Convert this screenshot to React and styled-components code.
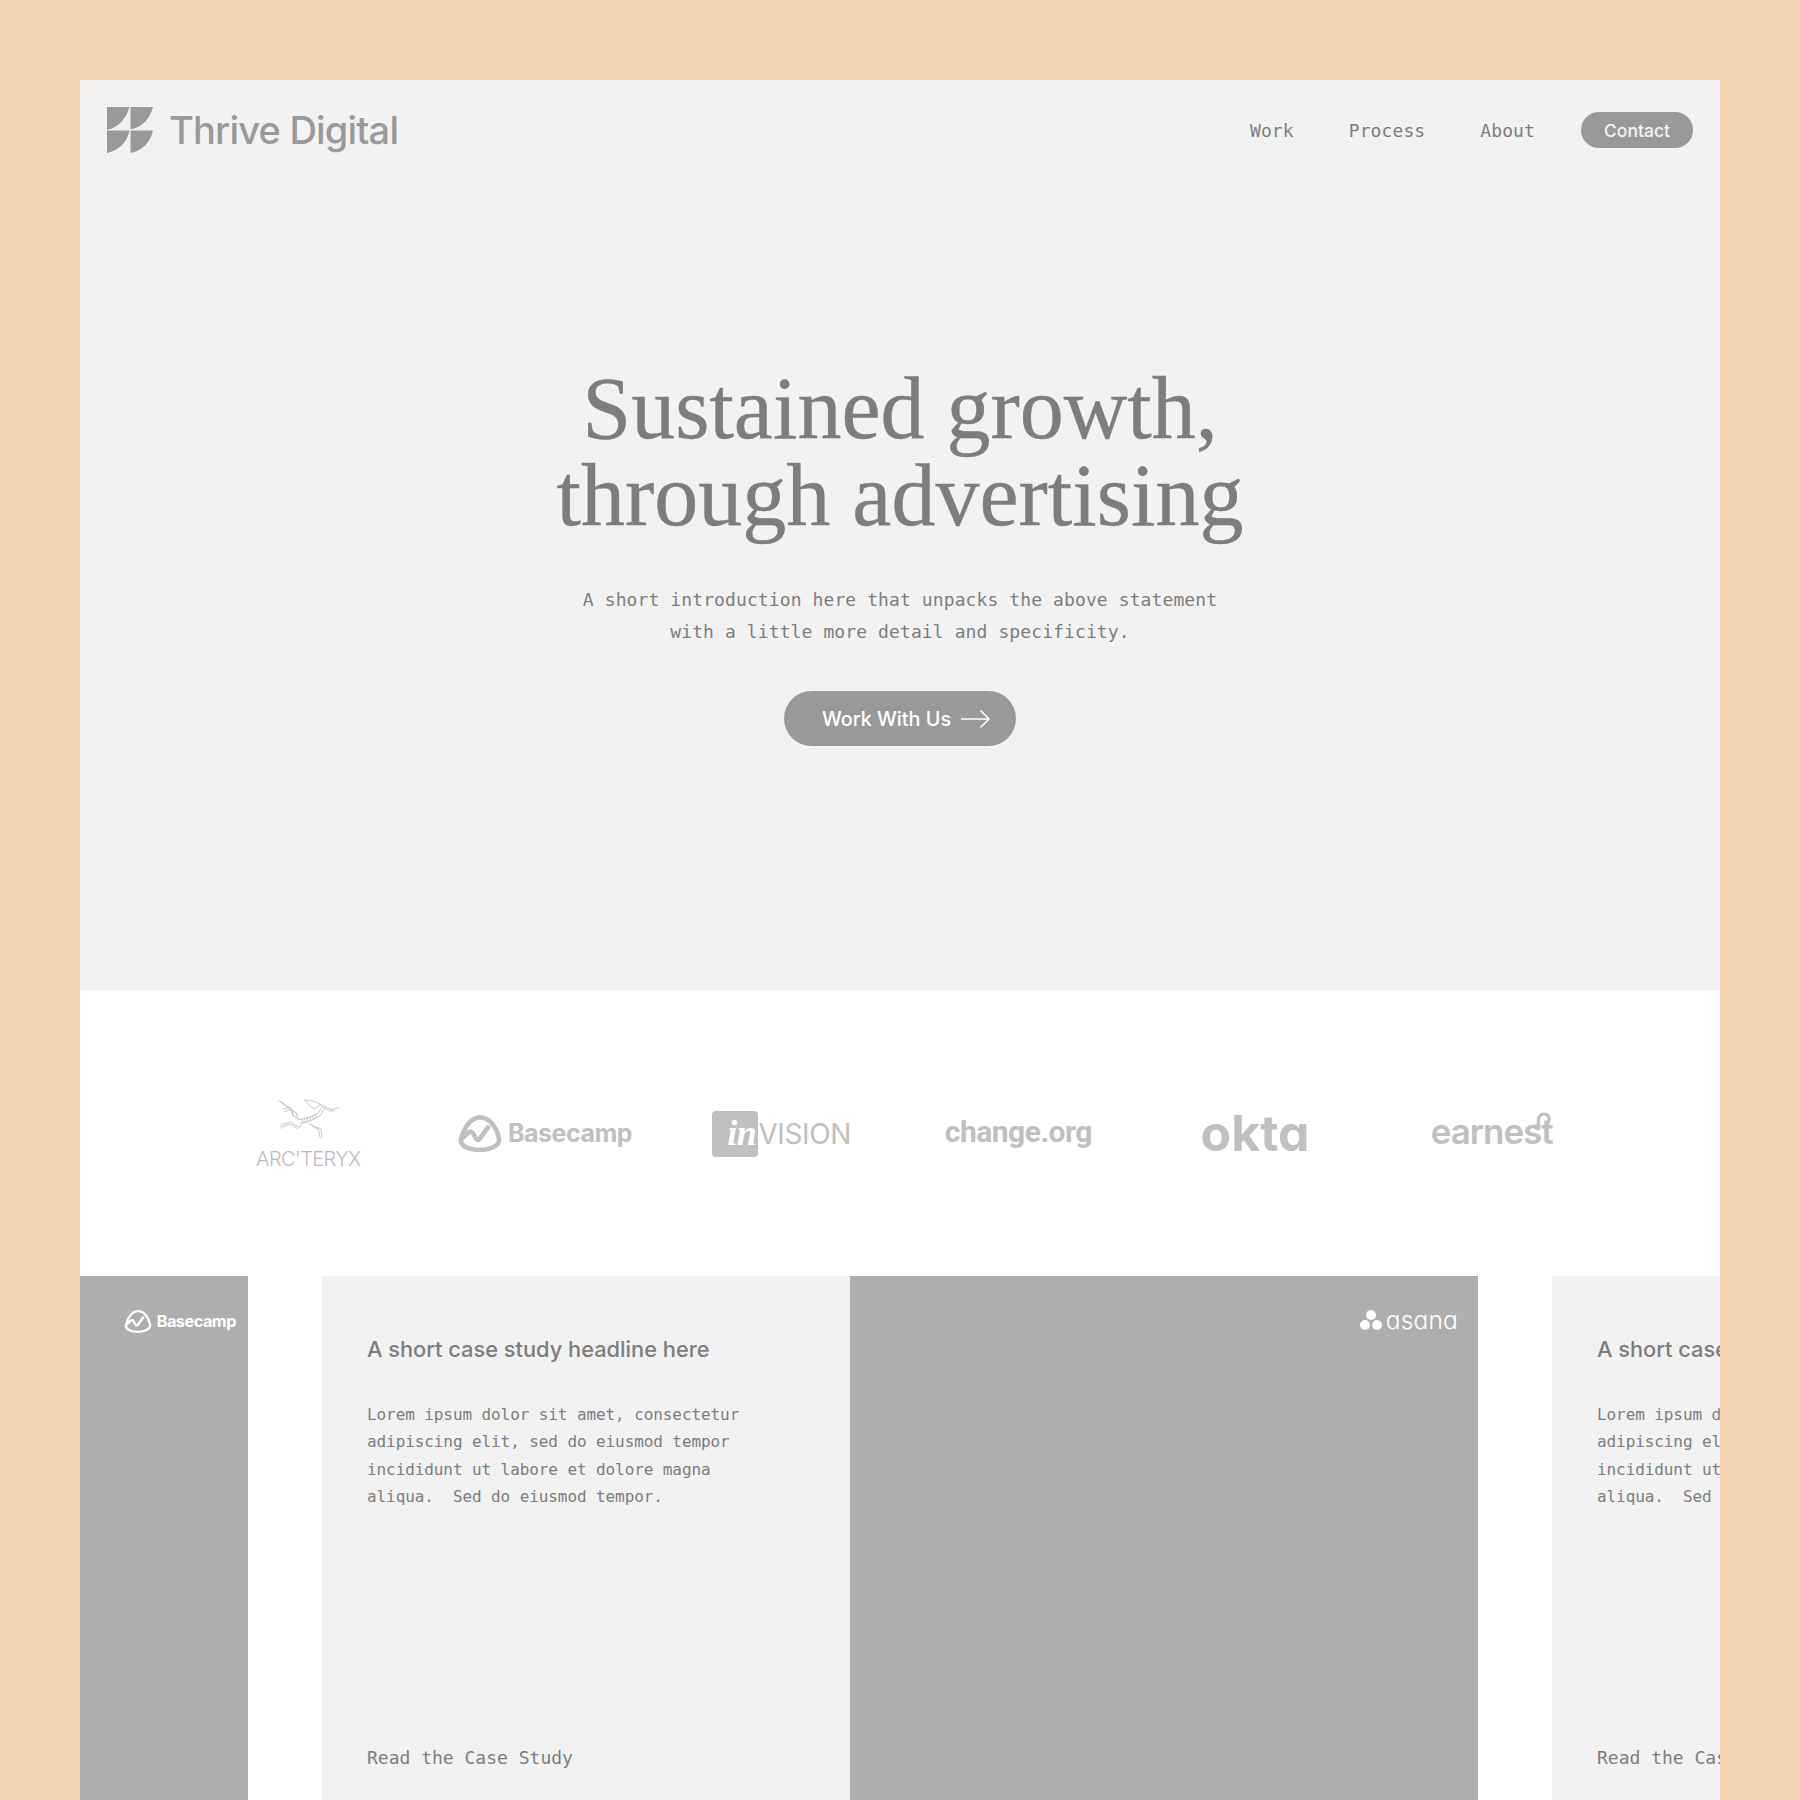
import styled, { createGlobalStyle } from "styled-components";

const GlobalStyle = createGlobalStyle`
  html, body {
    margin: 0;
    padding: 0;
    background: #f3d5b3;
  }
  #root {
    height: 1800px;
    overflow: hidden;
  }
`;

const sans = `Inter, "Liberation Sans", sans-serif`;
const mono = `"DejaVu Sans Mono", "Liberation Mono", monospace`;

const Frame = styled.div`
  width: 1640px;
  margin: 80px auto 0;
  background: #fff;
`;

const Hero = styled.section`
  height: 910px;
  background: #f2f2f2;
  display: flex;
  flex-direction: column;
`;

const Nav = styled.nav`
  display: flex;
  align-items: center;
  justify-content: space-between;
  padding: 27px 27px 0;
`;

const Brand = styled.div`
  display: flex;
  align-items: center;
  gap: 16px;
  font-family: ${sans};
  font-size: 38px;
  font-weight: 500;
  line-height: 46px;
  letter-spacing: -0.8px;
  color: #999;
`;

const NavLinks = styled.div`
  display: flex;
  align-items: center;
  gap: 55px;
`;

const NavLink = styled.a`
  font-family: ${mono};
  font-size: 18px;
  letter-spacing: 0.1px;
  color: #7d7d7d;
`;

const ContactButton = styled.a`
  width: 112px;
  height: 36px;
  margin-left: -9px;
  display: flex;
  align-items: center;
  justify-content: center;
  border-radius: 18px;
  background: #999;
  color: #f4f4f4;
  font-family: ${sans};
  font-size: 17.5px;
  font-weight: 500;
`;

const HeroBody = styled.div`
  display: flex;
  flex-direction: column;
  align-items: center;
  padding-top: 212px;
`;

const Headline = styled.h1`
  margin: 0;
  font-family: "Liberation Serif", serif;
  font-size: 88px;
  font-weight: 400;
  line-height: 87px;
  letter-spacing: 0;
  text-align: center;
  color: #7d7d7d;
  -webkit-text-stroke: 0.4px #7d7d7d;
`;

const Intro = styled.p`
  margin: 45px 0 0;
  font-family: ${mono};
  font-size: 18px;
  line-height: 32px;
  letter-spacing: 0.1px;
  text-align: center;
  color: #7d7d7d;
`;

const CtaButton = styled.a`
  width: 232px;
  height: 55px;
  margin-top: 43px;
  padding-left: 12px;
  box-sizing: border-box;
  display: flex;
  align-items: center;
  justify-content: center;
  gap: 10px;
  border-radius: 28px;
  background: #999;
  color: #fff;
  font-family: ${sans};
  font-size: 19.8px;
  font-weight: 500;
`;

const LogoRow = styled.section`
  height: 286px;
  padding: 0 110px;
  display: grid;
  grid-template-columns: repeat(6, 1fr);
  align-items: center;
  justify-items: center;
  color: #c0c0c0;
`;

const ArcteryxLogo = styled.div`
  display: flex;
  flex-direction: column;
  align-items: center;
  gap: 9px;
  font-family: ${sans};
  font-size: 20px;
  font-weight: 300;
  line-height: 20px;
  letter-spacing: -0.6px;
  color: #bbb;
`;

const BasecampLogo = styled.div`
  display: flex;
  align-items: center;
  gap: ${(p) => p.$gap}px;
  font-family: ${sans};
  font-weight: 700;
  font-size: ${(p) => p.$size}px;
  letter-spacing: -0.5px;
  color: ${(p) => p.$color || "inherit"};
`;

const InvisionLogo = styled.div`
  display: flex;
  align-items: center;
  margin-top: 2px;
  font-family: ${sans};
  font-size: 28px;
  font-weight: 400;
  letter-spacing: -0.4px;
`;

const InvisionBox = styled.span`
  width: 46px;
  height: 46px;
  padding: 2px 2px 0 0;
  box-sizing: border-box;
  border-radius: 4px;
  background: #c0c0c0;
  color: #fff;
  font-family: "Liberation Serif", serif;
  font-size: 36px;
  font-style: italic;
  font-weight: 700;
  line-height: 40px;
  text-align: right;
`;

const ChangeLogo = styled.div`
  margin-top: -4px;
  font-family: Roboto, ${sans};
  font-size: 30px;
  font-weight: 700;
  letter-spacing: -0.5px;
`;

const OktaLogo = styled.div`
  font-family: ${sans};
  font-size: 50px;
  font-weight: 700;
  letter-spacing: 0;
  font-feature-settings: "cv11";
`;

const EarnestLogo = styled.div`
  position: relative;
  margin-top: -4px;
  font-family: ${sans};
  font-size: 35px;
  font-weight: 600;
  letter-spacing: -1px;
`;

const EarnestLoop = styled.svg`
  position: absolute;
  right: 0;
  top: 2px;
`;

const Carousel = styled.section`
  height: 524px;
  overflow: hidden;
`;

const CardTrack = styled.div`
  display: flex;
  gap: 74px;
  height: 100%;
  margin-left: -988px;
`;

const Card = styled.article`
  flex: 0 0 auto;
  display: flex;
`;

const CardText = styled.div`
  width: 528px;
  box-sizing: border-box;
  padding: 58px 40px 0 45px;
  background: #f2f2f2;
  display: flex;
  flex-direction: column;
`;

const CardTitle = styled.h3`
  margin: 0;
  font-family: ${sans};
  font-size: 21.8px;
  font-weight: 500;
  line-height: 30px;
  color: #7d7d7d;
`;

const CardCopy = styled.p`
  margin: 37px 0 0;
  font-family: ${mono};
  font-size: 16px;
  line-height: 27.3px;
  letter-spacing: -0.09px;
  white-space: pre-wrap;
  color: #7d7d7d;
`;

const CardLink = styled.a`
  margin-top: 237px;
  font-family: ${mono};
  font-size: 18px;
  color: #7d7d7d;
`;

const CardImage = styled.div`
  width: 628px;
  box-sizing: border-box;
  padding: ${(p) => p.$top}px ${(p) => p.$inset}px 0 0;
  background: #aeaeae;
  display: flex;
  justify-content: flex-end;
  align-items: flex-start;
`;

const AsanaLogo = styled.div`
  display: flex;
  align-items: center;
  gap: 4px;
  font-family: ${sans};
  font-size: 24.5px;
  font-weight: 300;
  line-height: 26px;
  letter-spacing: 0.2px;
  color: #fff;
  font-feature-settings: "cv11";
`;

const ThriveMark = () => (
  <svg width="46" height="46" viewBox="0 0 46 46" fill="#999">
    <path d="M0 0H22.5C20 10 12 20 2 22.5H0Z" />
    <path d="M23.5 0H46C43 11 36 20 23.5 22.5Z" />
    <path d="M0 23.5H22.5C20 36 12 43 0 46Z" />
    <path d="M23.5 23.5H46C43 36 36 43 23.5 46Z" />
  </svg>
);

const Arrow = () => (
  <svg width="29" height="20" viewBox="0 0 29 20" fill="none" stroke="#fff" strokeWidth="1.5">
    <path d="M0 10H28M19.5 1.5L28 10L19.5 18.5" />
  </svg>
);

const BirdMark = () => (
  <svg width="65" height="42" viewBox="105 40 195 125" fill="none" stroke="#bdbdbd" strokeWidth="2.6" strokeLinejoin="round">
    <path d="M113 47L165 85L172 102M119 49L170 88" />
    <path d="M125 72L148 68L160 95L170 102M130 80L150 74L156 96" />
    <path d="M118 128L125 118L148 112L175 128L185 112M122 132L130 123L148 118L172 133" />
    <path d="M170 105Q205 102 232 84L246 62M178 115Q210 112 240 90L250 70" />
    <path d="M190 45L205 62L220 72L240 60L222 50Z" />
    <path d="M240 60L262 70L275 74L295 68M248 68L265 78L280 78" />
    <path d="M205 115L220 125L240 132L243 160M212 122L232 134L237 158" />
    <path d="M182 100L186 114M190 98L194 113M198 96L202 111M206 94L210 108M214 91L218 105M222 88L226 101" />
  </svg>
);

const BasecampMark = ({ size, color, weight }) => (
  <svg width={size} height={size * 0.88} viewBox="0 0 44 38" fill="none" stroke={color} strokeWidth={weight} strokeLinecap="round" strokeLinejoin="round">
    <path d="M3 25C7 11 14 3 22 3C31 3 38 12 41 24C42 31 33 35.5 22 35.5C11 35.5 2 32 3 25Z" />
    <path d="M3 25L11 18Q13 16 15 19L18 24Q20 27 22 24L30 13" />
  </svg>
);

const AsanaMark = () => (
  <svg width="22" height="20" viewBox="0 0 22 20" fill="#fff">
    <circle cx="11" cy="5" r="5" />
    <circle cx="5" cy="15" r="5" />
    <circle cx="17" cy="15" r="5" />
  </svg>
);

const loremText = `Lorem ipsum dolor sit amet, consectetur
adipiscing elit, sed do eiusmod tempor
incididunt ut labore et dolore magna
aliqua.  Sed do eiusmod tempor.`;

const cases = [
  {
    top: 33,
    inset: 12,
    logo: (
      <BasecampLogo $size={16.3} $gap={5} $color="#fff">
        <BasecampMark size={28} color="#fff" weight={3.6} />
        Basecamp
      </BasecampLogo>
    ),
  },
  {
    top: 31,
    inset: 20,
    logo: (
      <AsanaLogo>
        <AsanaMark />
        asana
      </AsanaLogo>
    ),
  },
  { top: 31, inset: 20, logo: null },
];

const App = () => (
  <>
    <GlobalStyle />
    <Frame>
      <Hero>
        <Nav>
          <Brand>
            <ThriveMark />
            Thrive Digital
          </Brand>
          <NavLinks>
            <NavLink>Work</NavLink>
            <NavLink>Process</NavLink>
            <NavLink>About</NavLink>
            <ContactButton>Contact</ContactButton>
          </NavLinks>
        </Nav>
        <HeroBody>
          <Headline>
            Sustained growth,
            <br />
            through advertising
          </Headline>
          <Intro>
            A short introduction here that unpacks the above statement
            <br />
            with a little more detail and specificity.
          </Intro>
          <CtaButton>
            Work With Us
            <Arrow />
          </CtaButton>
        </HeroBody>
      </Hero>

      <LogoRow>
        <ArcteryxLogo>
          <BirdMark />
          ARC'TERYX
        </ArcteryxLogo>
        <BasecampLogo $size={25} $gap={6}>
          <BasecampMark size={44} color="#c0c0c0" weight={4.6} />
          Basecamp
        </BasecampLogo>
        <InvisionLogo>
          <InvisionBox>in</InvisionBox>
          VISION
        </InvisionLogo>
        <ChangeLogo>change.org</ChangeLogo>
        <OktaLogo>okta</OktaLogo>
        <EarnestLogo>
          earnest
          <EarnestLoop width="20" height="16" viewBox="0 0 20 16" fill="none" stroke="#c0c0c0" strokeWidth="3.2">
            <path d="M1 14H6C4 8 6 2 11 2C16 2 18 8 14 12" />
          </EarnestLoop>
        </EarnestLogo>
      </LogoRow>

      <Carousel>
        <CardTrack>
          {cases.map((item, i) => (
            <Card key={i}>
              <CardText>
                <CardTitle>A short case study headline here</CardTitle>
                <CardCopy>{loremText}</CardCopy>
                <CardLink>Read the Case Study</CardLink>
              </CardText>
              <CardImage $top={item.top} $inset={item.inset}>{item.logo}</CardImage>
            </Card>
          ))}
        </CardTrack>
      </Carousel>
    </Frame>
  </>
);

export default App;
